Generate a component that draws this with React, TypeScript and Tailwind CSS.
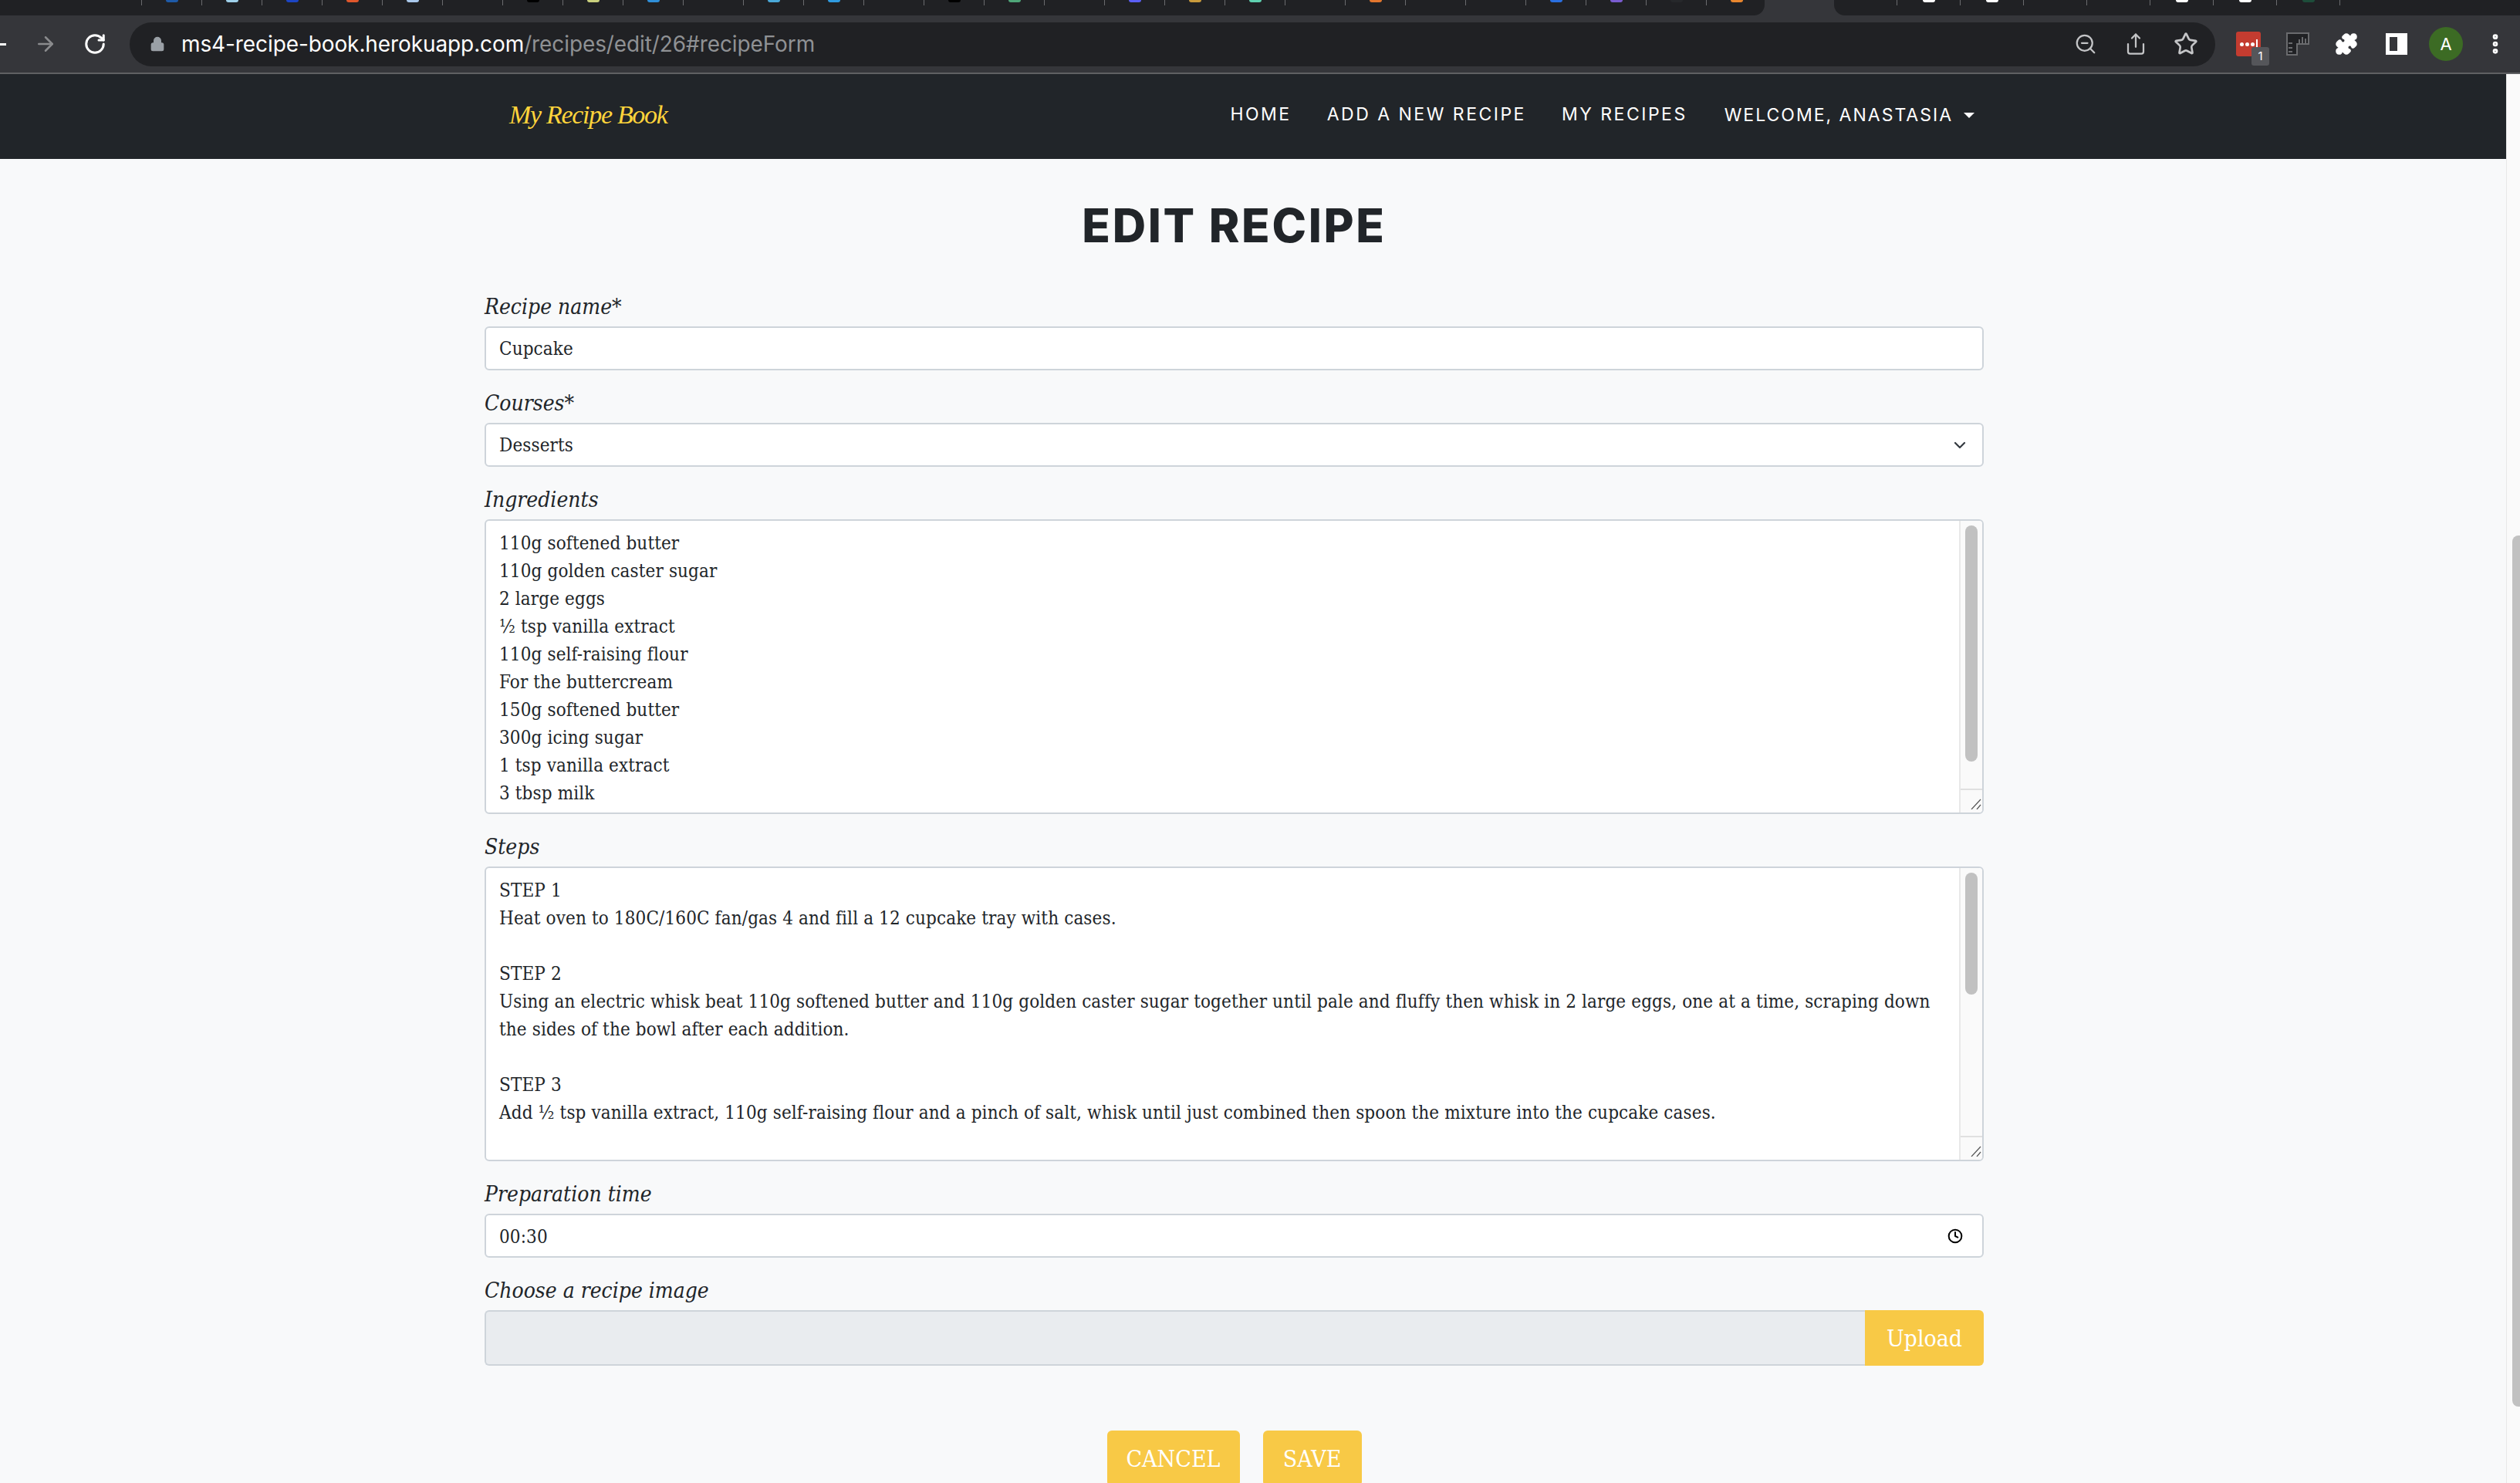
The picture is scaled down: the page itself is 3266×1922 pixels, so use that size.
import { ArrowRight, ChevronDown, Clock, Lock, MoreVertical, Puzzle, RotateCw, Share, Star, ZoomOut } from "lucide-react";
import type { ReactNode } from "react";

const leftTabs = [
  "", "bg-[#1e5aa8]", "bg-[#9fd0ea]", "bg-[#1c45c4]", "bg-[#e0572c]", "bg-[#a9c8ea]", "", "bg-black", "bg-[#c9cf7d]", "bg-[#2f8fd8]", "",
  "bg-[#4aa8d8]", "bg-[#2f9be0]", "", "bg-black", "bg-[#4fa679]", "", "bg-[#5b5ff5]", "bg-[#c99a3c]", "bg-[#5fd0b0]", "",
  "bg-[#e2762e]", "", "", "bg-[#2a6fe0]", "bg-[#7a5cd0]", "bg-[#26282b]", "bg-[#e8862e]",
];
const rightTabs = ["", "bg-white", "bg-white", "", "", "bg-white", "bg-white", "bg-[#1d4d3a]", ""];

const ingredients = `110g softened butter
110g golden caster sugar
2 large eggs
½ tsp vanilla extract
110g self-raising flour
For the buttercream
150g softened butter
300g icing sugar
1 tsp vanilla extract
3 tbsp milk`;

const steps = `STEP 1
Heat oven to 180C/160C fan/gas 4 and fill a 12 cupcake tray with cases.

STEP 2
Using an electric whisk beat 110g softened butter and 110g golden caster sugar together until pale and fluffy then whisk in 2 large eggs, one at a time, scraping down the sides of the bowl after each addition.

STEP 3
Add ½ tsp vanilla extract, 110g self-raising flour and a pinch of salt, whisk until just combined then spoon the mixture into the cupcake cases.`;

function Tab({ color, width, last }: { color: string; width: string; last?: boolean }) {
  return (
    <div className={`flex h-[7px] shrink-0 justify-center ${width} ${last ? "" : "border-r border-[#6a6b6e]"}`}>
      {color && <div className={`h-[3px] w-[16px] rounded-b-[6px] ${color}`} />}
    </div>
  );
}

function BrowserBar() {
  return (
    <div className="flex flex-col">
      <div className="flex h-[20px] bg-[#35363a]">
        <div className="flex w-[2287px] rounded-br-[14px] bg-[#202124] pl-[106px]">
          {leftTabs.map((color, i) => (
            <Tab key={i} color={color} width="w-[78px]" last={i === leftTabs.length - 1} />
          ))}
        </div>
        <div className="ml-[90px] flex flex-1 rounded-bl-[14px] bg-[#202124]">
          {rightTabs.map((color, i) => (
            <Tab key={i} color={color} width="w-[82px]" last={i === rightTabs.length - 1} />
          ))}
        </div>
      </div>
      <div className="flex h-[76px] items-center border-b-2 border-[#5f6063] bg-[#35363a]">
        <div className="h-[3px] w-[8px] bg-white" />
        <ArrowRight className="ml-[36px] size-[30px] text-[#8a8b8d]" strokeWidth={2} />
        <RotateCw className="ml-[34px] size-[30px] text-white" strokeWidth={2.4} />
        <div className="ml-[30px] flex h-[57px] w-[2703px] items-center rounded-full bg-[#202124] pl-[26px] pr-[22px]">
          <Lock className="size-[20px] fill-[#9aa0a6] text-[#9aa0a6]" />
          <div className="ml-[21px] font-['Inter',sans-serif] text-[28px] tracking-[-0.1px] text-white">
            ms4-recipe-book.herokuapp.com<span className="text-[#8f9194]">/recipes/edit/26#recipeForm</span>
          </div>
          <ZoomOut className="ml-auto size-[30px] text-[#c4c5c7]" strokeWidth={1.8} />
          <Share className="ml-[35px] size-[30px] text-[#c4c5c7]" strokeWidth={1.8} />
          <Star className="ml-[34px] size-[32px] text-[#c4c5c7]" strokeWidth={2} />
        </div>
        <div className="relative ml-[27px] flex h-[32px] w-[32px] items-center justify-center gap-[2px] rounded-[3px] bg-[#c43c30]">
          <div className="size-[5px] rounded-full bg-white" />
          <div className="size-[5px] rounded-full bg-white" />
          <div className="size-[5px] rounded-full bg-white" />
          <div className="h-[12px] w-[2px] bg-white" />
          <div className="absolute left-[20px] top-[20px] flex h-[24px] w-[23px] items-center justify-center rounded-[3px] bg-[#55565a] font-['Inter',sans-serif] text-[15px] text-white">
            1
          </div>
        </div>
        <svg className="ml-[33px] size-[30px]" viewBox="0 0 30 30">
          <path d="M1 1h28v14H14v14H1z" fill="#202124" stroke="#6a6b6e" strokeWidth="2" />
          <path d="M3 14h5M3 20h5M3 25h5M17 14V9M21 14V6M25 14V8" stroke="#6a6b6e" strokeWidth="2" fill="none" />
        </svg>
        <Puzzle className="ml-[33px] size-[30px] fill-white text-white" />
        <div className="ml-[36px] flex h-[28px] w-[28px] justify-end border-[5px] border-white border-l-[5px] border-r-[13px]" />
        <div className="ml-[28px] flex size-[44px] items-center justify-center rounded-full bg-[#3c6b24] font-['Inter',sans-serif] text-[22px] text-white">
          A
        </div>
        <MoreVertical className="ml-[26px] size-[32px] text-white" strokeWidth={3} />
      </div>
    </div>
  );
}

function Navbar() {
  return (
    <nav className="flex h-[110px] shrink-0 items-center bg-[#212529] pb-[6px] pl-[660px] pr-[689px] font-['Inter',sans-serif] text-[23px] tracking-[2.5px] text-white">
      <div className="font-['Liberation_Serif',serif] text-[34px] italic tracking-[-1.3px] text-[#ffd43b]">My Recipe Book</div>
      <div className="ml-auto flex items-center gap-[46px]">
        <span>HOME</span>
        <span>ADD A NEW RECIPE</span>
        <span>MY RECIPES</span>
        <span className="ml-[2px] mt-[3px] flex items-center tracking-[2px]">
          WELCOME, ANASTASIA
          <span className="ml-[14px] h-0 w-0 border-x-[7px] border-t-[7px] border-x-transparent border-t-white" />
        </span>
      </div>
    </nav>
  );
}

function Field({ label, children }: { label: string; children: ReactNode }) {
  return (
    <div className="mb-[24px]">
      <div className="mb-[8px] h-[36px] pt-[1px] text-[28px] leading-[36px] tracking-normal italic">{label}</div>
      {children}
    </div>
  );
}

function TextBox({ children }: { children: ReactNode }) {
  return (
    <div className="flex h-[57px] items-center rounded-[6px] border-2 border-[#ced4da] bg-white px-[17px]">{children}</div>
  );
}

function TextArea({ value, thumbHeight }: { value: string; thumbHeight: string }) {
  return (
    <div className="flex h-[382px] overflow-hidden rounded-[6px] border-2 border-[#ced4da] bg-white">
      <div className="flex-1 whitespace-pre-wrap py-[11px] pl-[17px] pr-[20px]">{value}</div>
      <div className="flex w-[30px] flex-col border-l-2 border-[#e8e8e8] bg-[#fafafa]">
        <div className="flex-1 pl-[6px] pt-[6px]">
          <div className={`w-[16px] rounded-full bg-[#c1c1c1] ${thumbHeight}`} />
        </div>
        <div className="h-[31px] border-t-2 border-[#e0e0e0]">
          <svg className="ml-[13px] mt-[11px] size-[14px]" viewBox="0 0 14 14">
            <path d="M1 14 13 1M8 14l5-6" stroke="#555" strokeWidth="1.2" fill="none" />
          </svg>
        </div>
      </div>
    </div>
  );
}

function YellowButton({ children, className }: { children: ReactNode; className: string }) {
  return (
    <div className={`flex items-center justify-center bg-[#f8c946] pt-[2px] text-[30px] tracking-normal text-white ${className}`}>{children}</div>
  );
}

export default function App() {
  return (
    <div className="flex h-[1922px] w-[3266px] flex-col overflow-hidden bg-[#f8f9fa]">
      <BrowserBar />
      <div className="flex min-h-0 flex-1">
        <div className="flex w-[3248px] flex-col">
          <Navbar />
          <main className="ml-[628px] w-[1943px] font-['DejaVu_Serif_Condensed','DejaVu_Serif',serif] text-[24px] leading-[36px] tracking-[0.12px] text-[#212529]">
            <h1 className="mb-[51px] mt-[50px] text-center font-['Inter',sans-serif] text-[60px] leading-[72px] font-extrabold tracking-[2.7px]">
              EDIT RECIPE
            </h1>
            <Field label="Recipe name*">
              <TextBox>Cupcake</TextBox>
            </Field>
            <Field label="Courses*">
              <TextBox>
                Desserts
                <ChevronDown className="ml-auto size-[24px] text-[#343a40]" strokeWidth={2.2} />
              </TextBox>
            </Field>
            <Field label="Ingredients">
              <TextArea value={ingredients} thumbHeight="h-[306px]" />
            </Field>
            <Field label="Steps">
              <TextArea value={steps} thumbHeight="h-[158px]" />
            </Field>
            <Field label="Preparation time">
              <TextBox>
                <span className="pt-[3px]">00:30</span>
                <Clock className="ml-auto mr-[8px] size-[20px] text-black" strokeWidth={2.4} />
              </TextBox>
            </Field>
            <Field label="Choose a recipe image">
              <div className="flex h-[72px]">
                <div className="flex-1 rounded-l-[6px] border-2 border-r-0 border-[#ced4da] bg-[#e9ecef]" />
                <YellowButton className="w-[154px] rounded-r-[6px]">Upload</YellowButton>
              </div>
            </Field>
            <div className="mt-[84px] flex justify-center gap-[30px]">
              <YellowButton className="h-[72px] w-[172px] rounded-[6px]">CANCEL</YellowButton>
              <YellowButton className="h-[72px] w-[128px] rounded-[6px]">SAVE</YellowButton>
            </div>
          </main>
        </div>
        <div className="flex-1 border-l border-[#e8e8e8] bg-[#fafafa] pl-[7px] pt-[598px]">
          <div className="h-[1129px] w-[10px] rounded-l-[8px] bg-[#c1c1c1]" />
        </div>
      </div>
    </div>
  );
}
